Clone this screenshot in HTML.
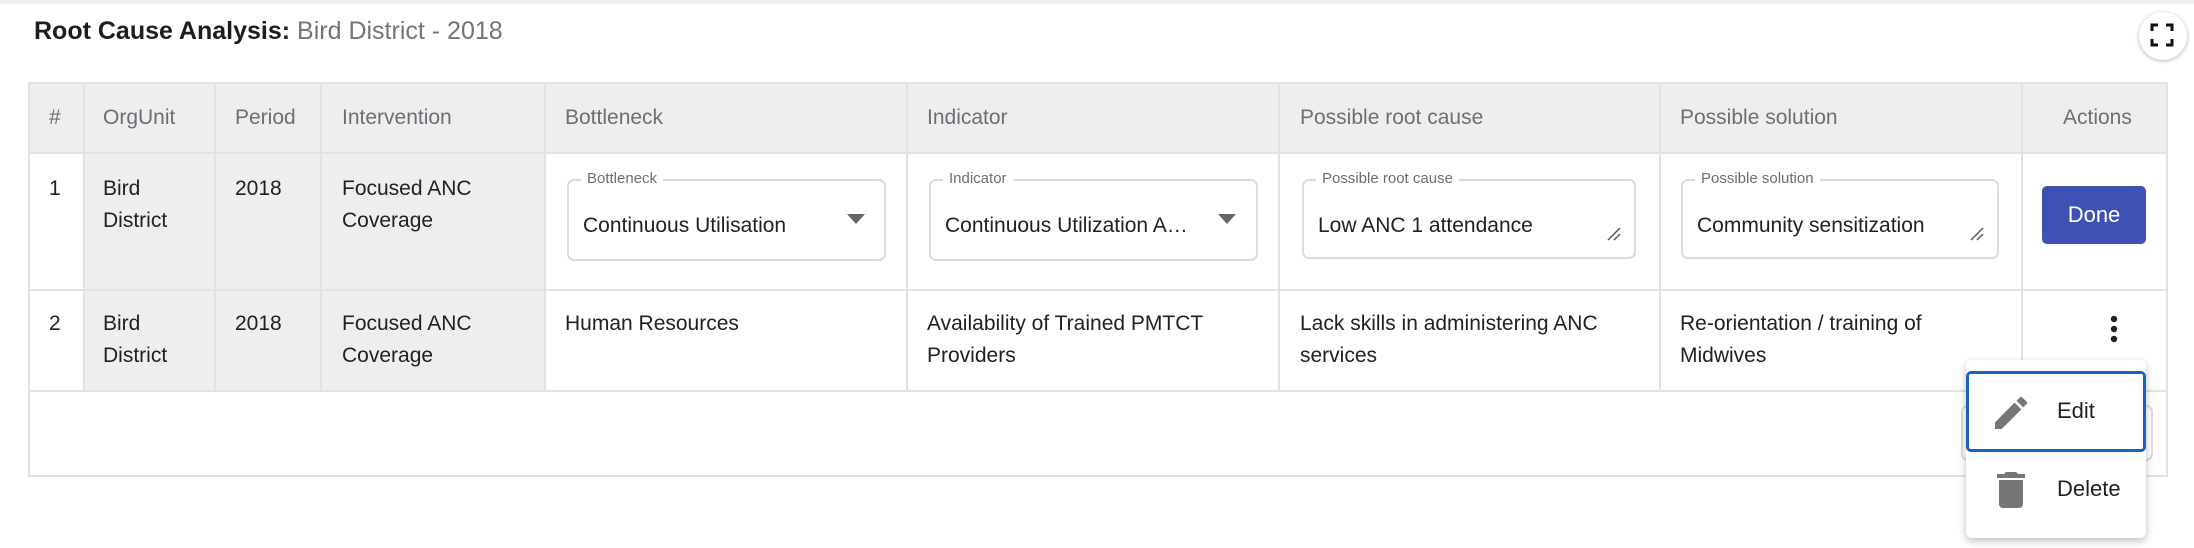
<!DOCTYPE html>
<html><head><meta charset="utf-8"><style>
*{box-sizing:border-box;margin:0;padding:0}
body{width:2194px;height:548px;background:#fff;position:relative;overflow:hidden;font-family:"Liberation Sans",Arial,sans-serif;color:#212121}
.a{position:absolute}
.t{font-size:21px;line-height:32px;white-space:nowrap}
.h{font-size:21px;color:#6b6f75;white-space:nowrap}
.vl{position:absolute;width:2px;background:#e0e2e5}
.hl{position:absolute;height:2px;background:#e0e2e5}
.gray{position:absolute;background:#eeeeee}
.box{position:absolute;border:2px solid #dcdcdc;border-radius:7px;background:#fff}
.lbl{position:absolute;top:-11px;left:12px;background:#fff;padding:0 6px;font-size:15px;color:#6b6f75;line-height:18px}
.val{position:absolute;left:14px;top:30px;font-size:21px;line-height:30px;white-space:nowrap}
</style></head><body>
<div class="a" style="left:0;top:0;width:2194px;height:4px;background:#eef0f3"></div>
<div class="a" style="left:34px;top:14px;font-size:25px;line-height:34px;white-space:nowrap"><span style="color:#1d1d1d;font-weight:bold">Root Cause Analysis:</span> <span style="color:#70757b">Bird District - 2018</span></div>
<div class="a" style="left:2139px;top:12px;width:48px;height:48px;border-radius:50%;background:#fff;box-shadow:0 1px 4px rgba(0,0,0,.3)"></div>
<svg class="a" style="left:2150px;top:23px" width="24" height="24" viewBox="0 0 24 24"><path d="M2 8V2h6M16 2h6v6M22 16v6h-6M8 22H2v-6" fill="none" stroke="#111" stroke-width="3"/></svg>

<div class="gray" style="left:29px;top:83px;width:2138px;height:70px"></div>
<div class="gray" style="left:84px;top:153px;width:461px;height:239px"></div>
<div class="hl" style="left:29px;top:82px;width:2138px"></div>
<div class="hl" style="left:29px;top:152px;width:2138px"></div>
<div class="hl" style="left:29px;top:289px;width:2138px"></div>
<div class="hl" style="left:29px;top:390px;width:2138px"></div>
<div class="hl" style="left:29px;top:475px;width:2138px"></div>
<div class="vl" style="left:28px;top:82px;height:395px"></div>
<div class="vl" style="left:2166px;top:82px;height:395px"></div>
<div class="vl" style="left:83px;top:82px;height:310px"></div>
<div class="vl" style="left:214px;top:82px;height:310px"></div>
<div class="vl" style="left:320px;top:82px;height:310px"></div>
<div class="vl" style="left:544px;top:82px;height:310px"></div>
<div class="vl" style="left:906px;top:82px;height:310px"></div>
<div class="vl" style="left:1278px;top:82px;height:310px"></div>
<div class="vl" style="left:1659px;top:82px;height:310px"></div>
<div class="vl" style="left:2021px;top:82px;height:310px"></div>

<div class="a h" style="left:49px;top:106px">#</div>
<div class="a h" style="left:103px;top:106px">OrgUnit</div>
<div class="a h" style="left:235px;top:106px">Period</div>
<div class="a h" style="left:342px;top:106px">Intervention</div>
<div class="a h" style="left:565px;top:106px">Bottleneck</div>
<div class="a h" style="left:927px;top:106px">Indicator</div>
<div class="a h" style="left:1300px;top:106px">Possible root cause</div>
<div class="a h" style="left:1680px;top:106px">Possible solution</div>
<div class="a h" style="left:2063px;top:106px">Actions</div>

<div class="a t" style="left:49px;top:173px">1</div>
<div class="a t" style="left:103px;top:173px">Bird<br>District</div>
<div class="a t" style="left:235px;top:173px">2018</div>
<div class="a t" style="left:342px;top:173px">Focused ANC<br>Coverage</div>
<div class="box" style="left:567px;top:179px;width:319px;height:82px"><div class="lbl">Bottleneck</div><div class="val">Continuous Utilisation</div>
<svg class="a" style="left:278px;top:33px" width="18" height="10"><path d="M0 0h18L9 10z" fill="#666"/></svg></div>
<div class="box" style="left:929px;top:179px;width:329px;height:82px"><div class="lbl">Indicator</div><div class="val">Continuous Utilization A…</div>
<svg class="a" style="left:287px;top:33px" width="18" height="10"><path d="M0 0h18L9 10z" fill="#666"/></svg></div>
<div class="box" style="left:1302px;top:179px;width:334px;height:80px"><div class="lbl">Possible root cause</div><div class="val">Low ANC 1 attendance</div>
<svg class="a" style="left:302px;top:44px" width="16" height="16"><path d="M2 15L14 3M8 15L14 9" stroke="#555" stroke-width="1.5"/></svg></div>
<div class="box" style="left:1681px;top:179px;width:318px;height:80px"><div class="lbl">Possible solution</div><div class="val">Community sensitization</div>
<svg class="a" style="left:286px;top:44px" width="16" height="16"><path d="M2 15L14 3M8 15L14 9" stroke="#555" stroke-width="1.5"/></svg></div>
<div class="a" style="left:2042px;top:186px;width:104px;height:58px;background:#3f51b5;border-radius:5px;color:#fff;font-size:22px;line-height:58px;text-align:center">Done</div>

<div class="a t" style="left:49px;top:308px">2</div>
<div class="a t" style="left:103px;top:308px">Bird<br>District</div>
<div class="a t" style="left:235px;top:308px">2018</div>
<div class="a t" style="left:342px;top:308px">Focused ANC<br>Coverage</div>
<div class="a t" style="left:565px;top:308px">Human Resources</div>
<div class="a t" style="left:927px;top:308px">Availability of Trained PMTCT<br>Providers</div>
<div class="a t" style="left:1300px;top:308px">Lack skills in administering ANC<br>services</div>
<div class="a t" style="left:1680px;top:308px">Re-orientation / training of<br>Midwives</div>
<svg class="a" style="left:2108px;top:315px" width="12" height="30"><circle cx="6" cy="4" r="3.2" fill="#222"/><circle cx="6" cy="14" r="3.2" fill="#222"/><circle cx="6" cy="24" r="3.2" fill="#222"/></svg>

<div class="a" style="left:1961px;top:405px;width:192px;height:56px;border:2px solid #dcdcdc;border-radius:7px"></div>

<div class="a" style="left:1966px;top:360px;width:180px;height:178px;background:#fff;border-radius:6px;box-shadow:0 3px 8px rgba(0,0,0,.25)"></div>
<div class="a" style="left:1966px;top:371px;width:180px;height:81px;border:3px solid #1565c0;border-radius:5px"></div>
<svg class="a" style="left:1995px;top:397px" width="32" height="32" viewBox="3 3 18 18"><path d="M3 17.25V21h3.75L17.81 9.94l-3.75-3.750L3 17.25zM20.710 7.04a1 1 0 000-1.41l-2.34-2.34a1 1 0 00-1.41 0l-1.83 1.83 3.75 3.75 1.83-1.83z" fill="#757575"/></svg>
<div class="a" style="left:2057px;top:397px;font-size:22px;line-height:28px">Edit</div>
<svg class="a" style="left:1993px;top:472px" width="36" height="36" viewBox="3 3 18 18"><path d="M6 19c0 1.1.9 2 2 2h8c1.1 0 2-.9 2-2V7H6v12zM19 4h-3.5l-1-1h-5l-1 1H5v2h14V4z" fill="#757575"/></svg>
<div class="a" style="left:2057px;top:475px;font-size:22px;line-height:28px">Delete</div>
</body></html>
